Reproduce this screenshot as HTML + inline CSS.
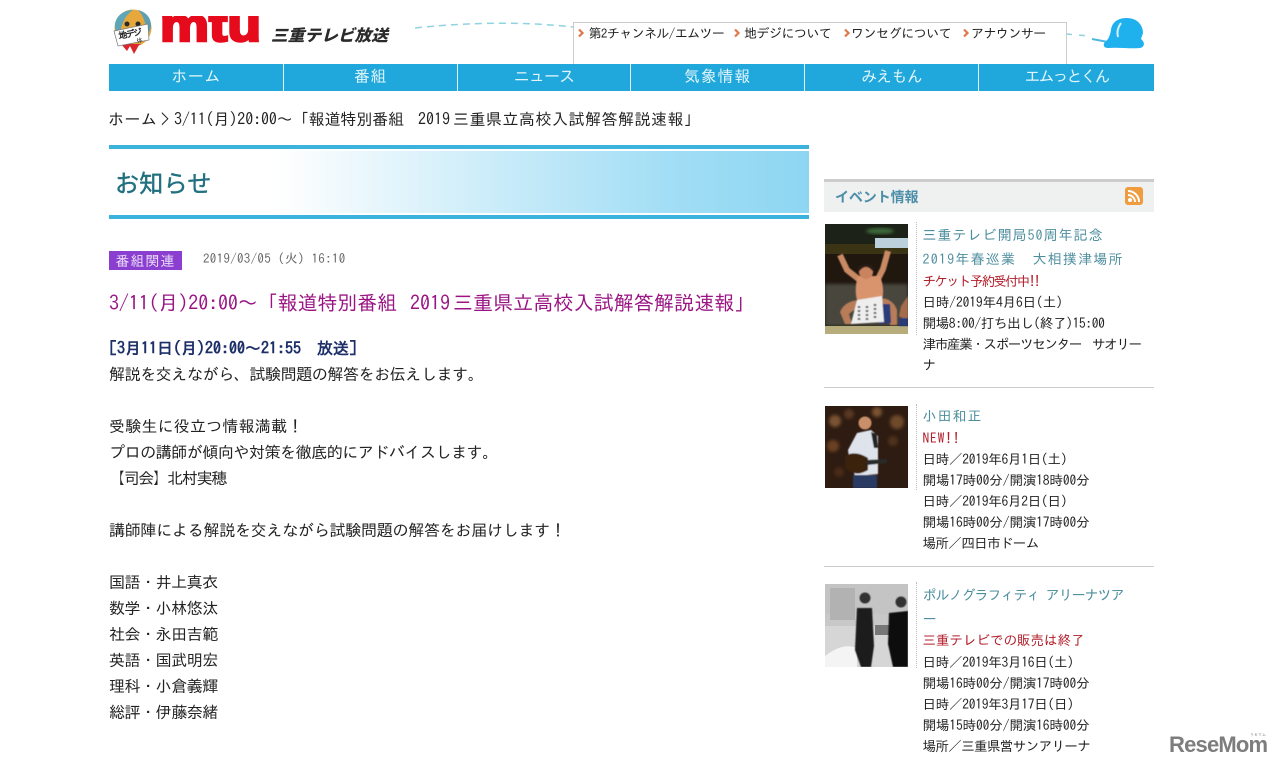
<!DOCTYPE html>
<html lang="ja"><head><meta charset="utf-8"><title>お知らせ</title>
<style>
html,body{margin:0;padding:0;background:#fff;width:1280px;height:768px;overflow:hidden}
body{position:relative;font-family:"IPAGothic","Liberation Sans","Noto Sans CJK JP",sans-serif;color:#222}
.t{position:absolute;white-space:nowrap;margin:0;font-weight:normal}
.b{font-size:16px;line-height:26px;left:109px;color:#222;letter-spacing:-.45px}
.s{font-size:13.5px;line-height:21px;left:922.500px;color:#222;letter-spacing:-.1px}
.l{font-size:14px;line-height:24px;left:922.500px;color:#4d8e9e;letter-spacing:1px}
.r{font-size:13.5px;line-height:21px;left:922.500px;color:#b3202c}
.sep{position:absolute;left:824px;width:330px;height:1px;background:#ccc}
.dot{position:absolute;left:916px;width:0;border-left:1px dotted #bbb}
.ph{position:absolute;left:825px;width:83px;overflow:hidden}
nav a{position:absolute;top:64px;height:27px;line-height:25px;text-align:center;color:#e2f5fb;font-size:16px;letter-spacing:.5px;text-decoration:none;border-right:1px solid #e8f6fb;box-sizing:border-box}
.sub{position:absolute;top:24px;font-size:13px;line-height:20px;color:#222;white-space:nowrap}
</style></head><body>

<svg style="position:absolute;left:0;top:0" width="1280" height="64">
<defs><clipPath id="lc"><rect x="155" y="16" width="110" height="28"/></clipPath></defs>
<path d="M415 28 Q500 19 573 27" fill="none" stroke="#8fd3e0" stroke-width="1.5" stroke-dasharray="7 5"/>
<path d="M1066 34 L1090 36" fill="none" stroke="#8fd3e0" stroke-width="1.5" stroke-dasharray="6 7"/>
<path d="M1092 39 L1108 42" stroke="#4fb8e0" stroke-width="2" fill="none"/>
<path d="M1105 42 C1108 40 1110 36 1111 30 C1112 22 1118 18 1127 18 C1137 18 1143 25 1143 33 L1141 39 C1145 42 1145 47 1140 48 C1130 49 1118 47 1108 48 C1103 48 1103 44 1105 42Z" fill="#1fb0ee"/>
<path d="M1121 23 Q1116 30 1118 37" stroke="#d5f0fb" stroke-width="2" fill="none"/>
<!-- mascot -->
<circle cx="133" cy="28" r="18.5" fill="#e6a83c"/>
<path d="M115 28 C114 16 124 10 133 10 C128 14 122 18 119 38Z" fill="#5fa6b8"/>
<path d="M151 28 C152 18 146 12 138 10 C144 16 146 24 147 36Z" fill="#5f9fb2"/>
<circle cx="127" cy="24" r="2.5" fill="#2a2a2a"/><circle cx="138" cy="24" r="2.5" fill="#2a2a2a"/>
<path d="M121 44 L127 51 L130 46 L134 54 L139 45 L142 44Z" fill="#d8282c"/>
<path d="M114 31 L148 24 L149 40 L118 46Z" fill="#fff" stroke="#777" stroke-width=".7"/>
<text x="119" y="39" font-size="9" font-weight="bold" fill="#222" transform="rotate(-10 119 39)" font-family="IPAGothic,sans-serif" textLength="24">地デジ</text>
<text x="137" y="43" font-size="6" fill="#222" transform="rotate(-10 137 43)" font-family="IPAGothic,sans-serif">体</text>
<!-- logo -->
<g clip-path="url(#lc)"><text x="160" y="41" font-family="'Liberation Sans',sans-serif" font-weight="bold" font-size="46" fill="#e60b1c" stroke="#e60b1c" stroke-width="2.5" textLength="101" lengthAdjust="spacingAndGlyphs">mtu</text></g>
<text x="271" y="41" font-family="'Noto Sans CJK JP',sans-serif" font-weight="900" font-size="16" fill="#2b2b2b" textLength="117" lengthAdjust="spacingAndGlyphs" font-style="italic">三重テレビ放送</text>
</svg>

<div style="position:absolute;left:573px;top:22px;width:492px;height:42px;border:1px solid #ccc;border-bottom:0;box-sizing:content-box"></div>
<svg style="position:absolute;left:0;top:0" width="1280" height="64">
<g fill="none" stroke="#e0784a" stroke-width="2.2"><path d="M579 29.500 l3.500 3.500 l-3.500 3.500"/><path d="M735 29.500 l3.500 3.500 l-3.500 3.500"/><path d="M845 29.500 l3.500 3.500 l-3.500 3.500"/><path d="M964 29.500 l3.500 3.500 l-3.500 3.500"/></g></svg>
<a class="sub" style="left:588.500px;letter-spacing:-.6px">第2チャンネル/エムツー</a>
<a class="sub" style="left:744px;letter-spacing:-.5px">地デジについて</a>
<a class="sub" style="left:851px;letter-spacing:-.45px">ワンセグについて</a>
<a class="sub" style="left:971px;letter-spacing:-.55px">アナウンサー</a>

<nav>
<div style="position:absolute;left:109px;top:64px;width:1045px;height:27px;background:#20a8dc"></div>
<a style="left:109px;width:175px">ホーム</a>
<a style="left:284px;width:174px">番組</a>
<a style="left:458px;width:173px;letter-spacing:-.9px">ニュース</a>
<a style="left:631px;width:174px;letter-spacing:.8px">気象情報</a>
<a style="left:805px;width:174px;letter-spacing:-.8px">みえもん</a>
<a style="left:979px;width:175px;border-right:0;letter-spacing:-2px">エムっとくん</a>
</nav>

<p class="t" style="left:108px;top:107px;font-size:16px;line-height:24px;color:#222;letter-spacing:.4px">ホーム</p>
<p class="t" style="left:161px;top:107px;font-size:16px;line-height:24px;color:#222">&gt;</p>
<p class="t" style="left:174px;top:107px;font-size:16px;line-height:24px;color:#222;letter-spacing:-.1px">3/11(月)20:00～「報道特別番組</p>
<p class="t" style="left:418px;top:107px;font-size:16px;line-height:24px;color:#222">2019</p>
<p class="t" style="left:453px;top:107px;font-size:16px;line-height:24px;color:#222;letter-spacing:.5px">三重県立高校入試解答解説速報」</p>

<div style="position:absolute;left:109px;top:145px;width:700px;height:74px;box-sizing:border-box;border-top:4px solid #3cb3dc;border-bottom:4px solid #3cb3dc;background:linear-gradient(90deg,#fff 0,#fff 24%,#e4f5fc 40%,#bfe8f8 62%,#a2def5 80%,#8dd6f1 100%);box-shadow:inset 0 2px 0 #fff,inset 0 -2px 0 #fff"></div>
<p class="t" style="left:115px;top:167px;font-size:24px;line-height:30px;color:#21707f;font-family:'Noto Sans CJK JP',sans-serif;letter-spacing:.3px;-webkit-text-stroke:.4px #21707f">お知らせ</p>

<div style="position:absolute;left:109px;top:251px;width:73px;height:19px;background:#8b3fd1;color:#eadcf7;font-size:14px;line-height:20px;text-align:center;letter-spacing:1px;white-space:nowrap">番組関連</div>
<p class="t" style="left:203px;top:249px;font-size:13px;line-height:20px;color:#666;letter-spacing:.3px">2019/03/05 (火) 16:10</p>

<h1 class="t" style="left:109px;top:290px;font-size:20px;line-height:26px;color:#9a1583;letter-spacing:-.1px">3/11(月)20:00～「報道特別番組</h1>
<p class="t" style="left:410px;top:290px;font-size:20px;line-height:26px;color:#9a1583">2019</p>
<p class="t" style="left:453px;top:290px;font-size:20px;line-height:26px;color:#9a1583;letter-spacing:.1px">三重県立高校入試解答解説速報」</p>

<p class="t b" style="top:335px;color:#1c2f68;font-weight:bold;letter-spacing:0">[3月11日(月)20:00～21:55&nbsp;&nbsp;放送]</p>
<p class="t b" style="top:361px;letter-spacing:-.4px">解説を交えながら、試験問題の解答をお伝えします。</p>
<p class="t b" style="top:413px;letter-spacing:.2px">受験生に役立つ情報満載！</p>
<p class="t b" style="top:439px;">プロの講師が傾向や対策を徹底的にアドバイスします。</p>
<p class="t b" style="top:465px;letter-spacing:-1.4px">【司会】北村実穂</p>
<p class="t b" style="top:517px;letter-spacing:-.25px">講師陣による解説を交えながら試験問題の解答をお届けします！</p>
<p class="t b" style="top:569px">国語・井上真衣</p>
<p class="t b" style="top:595px">数学・小林悠汰</p>
<p class="t b" style="top:621px">社会・永田吉範</p>
<p class="t b" style="top:647px">英語・国武明宏</p>
<p class="t b" style="top:673px">理科・小倉義輝</p>
<p class="t b" style="top:699px">総評・伊藤奈緒</p>

<!-- sidebar -->
<div style="position:absolute;left:824px;top:179px;width:330px;height:33px;background:#eff0f0;border-top:3px solid #ccc;box-sizing:border-box"></div>
<p class="t" style="left:835px;top:187px;font-size:14px;line-height:20px;font-weight:bold;color:#4c8ea8;font-family:'Noto Sans CJK JP',sans-serif;letter-spacing:-.1px">イベント情報</p>
<svg style="position:absolute;left:1125px;top:187px" width="18" height="18"><rect width="18" height="18" rx="3" fill="#ee9c3f"/><circle cx="5" cy="13" r="2" fill="#fff"/><path d="M3 8 A7 7 0 0 1 10 15 M3 4 A11 11 0 0 1 14 15" fill="none" stroke="#fff" stroke-width="2"/></svg>

<!-- item 1 -->
<svg class="ph" style="top:224px" width="83" height="110" viewBox="0 0 83 110">
<defs><filter id="f"><feGaussianBlur stdDeviation=".5"/></filter><filter id="g"><feGaussianBlur stdDeviation="1.500"/></filter></defs>
<rect width="83" height="110" fill="#20170f"/>
<rect y="0" width="83" height="20" fill="#1c2218"/>
<ellipse cx="55" cy="7" rx="14" ry="3" fill="#3c6a3a" filter="url(#g)"/>
<rect y="20" width="83" height="10" fill="#3b3414"/>
<rect y="60" width="83" height="42" fill="#4a463e" filter="url(#g)"/>
<rect y="102" width="83" height="8" fill="#b7ac7c"/>
<rect x="50" y="14" width="33" height="10" fill="#bcd0dc"/>
<g filter="url(#f)">
<path d="M15 31 L22 46 L36 57" fill="none" stroke="#c98a63" stroke-width="6"/>
<path d="M63 27 L58 45 L52 57" fill="none" stroke="#c98a63" stroke-width="6"/>
<path d="M33 52 L55 52 Q60 65 57 76 L32 76 Q29 65 33 52Z" fill="#d9946e"/>
<circle cx="41" cy="48" r="7" fill="#c9835f"/>
<path d="M34 46 Q41 38 48 46 L48 44 Q41 38 34 44Z" fill="#2a1a12" stroke="#2a1a12" stroke-width="2"/>
<path d="M36 76 Q20 76 15 88 L20 100 L27 100 L24 90 Q30 84 38 84Z" fill="#b97c58"/>
<path d="M54 74 Q68 74 72 86 L72 101 L65 101 L64 90 Q60 84 54 84Z" fill="#b97c58"/>
<path d="M56 80 L65 80 L66 99 L54 100Z" fill="#2a3a78"/>
<path d="M32 76 L57 72 L59 98 L26 100Z" fill="#eeeeee"/>
<path d="M34 82 v14 M42 82 v14 M50 80 v14" stroke="#555" stroke-width="2.500" stroke-dasharray="2 2"/>
<path d="M83 72 L76 82 L74 92 L83 98Z" fill="#a56c4c"/>
<rect x="74" y="94" width="9" height="8" fill="#2a3a78"/>
</g></svg>
<div class="dot" style="top:222px;height:113px"></div>
<p class="t l" style="top:223px">三重テレビ開局50周年記念</p>
<p class="t l" style="top:247px;letter-spacing:1.2px">2019年春巡業&nbsp; 大相撲津場所</p>
<p class="t r" style="top:271px;letter-spacing:-1.7px">チケット予約受付中!!</p>
<p class="t s" style="top:292px">日時/2019年4月6日(土)</p>
<p class="t s" style="top:313px;letter-spacing:-.35px">開場8:00/打ち出し(終了)15:00</p>
<p class="t s" style="top:334px;letter-spacing:-1.3px">津市産業・スポーツセンター&nbsp; サオリー</p>
<p class="t s" style="top:355px">ナ</p>
<div class="sep" style="top:387px"></div>

<!-- item 2 -->
<svg class="ph" style="top:406px" width="83" height="82" viewBox="0 0 83 82">
<rect width="83" height="82" fill="#2e1c12"/>
<g filter="url(#g)"><circle cx="10" cy="15" r="6" fill="#7a5230"/><circle cx="24" cy="8" r="5" fill="#5a3820"/><circle cx="72" cy="16" r="7" fill="#6e4a2c"/><circle cx="8" cy="40" r="6" fill="#6a3f22"/><circle cx="68" cy="35" r="5" fill="#50321e"/><circle cx="52" cy="6" r="5" fill="#7a5230"/><circle cx="14" cy="66" r="5" fill="#4a2a16"/></g>
<g filter="url(#f)">
<path d="M23 44 L32 27 L46 24 L53 30 L53 68 L30 70 L24 52Z" fill="#dfe3ec"/>
<circle cx="40" cy="17" r="6.500" fill="#c98f6a"/>
<path d="M20 50 Q30 44 43 52 L43 64 Q30 72 20 62Z" fill="#3a2110"/>
<path d="M42 54 L62 53 L62 57 L42 59Z" fill="#2a2a2a"/>
<path d="M46 26 L52 28 L53 42 L49 42Z" fill="#222"/>
<rect x="28" y="69" width="24" height="13" fill="#2a3a64"/>
</g></svg>
<div class="dot" style="top:404px;height:86px"></div>
<p class="t l" style="top:404px">小田和正</p>
<p class="t r" style="top:428px;letter-spacing:.8px">NEW!!</p>
<p class="t s" style="top:449px;letter-spacing:-.25px">日時／2019年6月1日(土)</p>
<p class="t s" style="top:470px">開場17時00分/開演18時00分</p>
<p class="t s" style="top:491px;letter-spacing:-.25px">日時／2019年6月2日(日)</p>
<p class="t s" style="top:512px">開場16時00分/開演17時00分</p>
<p class="t s" style="top:533px;letter-spacing:-.6px">場所／四日市ドーム</p>
<div class="sep" style="top:566px"></div>

<!-- item 3 -->
<svg class="ph" style="top:584px" width="83" height="83" viewBox="0 0 83 83">
<rect width="83" height="83" fill="#c8c8c8"/>
<rect y="0" width="83" height="30" fill="#c4c4c4" />
<rect x="5" y="4" width="25" height="32" fill="#b2b2b2"/>
<rect y="42" width="83" height="41" fill="#d6d6d6"/>
<path d="M0 72 Q18 58 32 64 L32 83 L0 83Z" fill="#f4f4f4"/>
<rect x="50" y="41" width="14" height="10" fill="#777"/>
<g filter="url(#f)">
<circle cx="40" cy="14" r="5.500" fill="#333"/>
<path d="M32 24 L47 24 L49 62 L46 83 L36 83 L30 66Z" fill="#1a1a1a"/>
<circle cx="76" cy="18" r="5.500" fill="#333"/>
<path d="M64 29 L83 27 L83 83 L68 83 L63 60Z" fill="#111"/>
</g></svg>
<div class="dot" style="top:582px;height:86px"></div>
<p class="t l" style="top:583px;letter-spacing:-1px">ポルノグラフィティ アリーナツア</p>
<p class="t l" style="top:607px">ー</p>
<p class="t r" style="top:630px">三重テレビでの販売は終了</p>
<p class="t s" style="top:652px;letter-spacing:-.25px">日時／2019年3月16日(土)</p>
<p class="t s" style="top:673px">開場16時00分/開演17時00分</p>
<p class="t s" style="top:694px;letter-spacing:-.25px">日時／2019年3月17日(日)</p>
<p class="t s" style="top:715px">開場15時00分/開演16時00分</p>
<p class="t s" style="top:736px;letter-spacing:-.6px">場所／三重県営サンアリーナ</p>

<div class="t" style="left:1169px;top:732px;font:bold 22px/26px 'Liberation Sans',sans-serif;color:#7d7d7d;letter-spacing:-.8px">ReseMom</div>
<div class="t" style="left:1250px;top:732px;font:4px/6px 'IPAGothic',sans-serif;color:#888">リセマム</div>
</body></html>
